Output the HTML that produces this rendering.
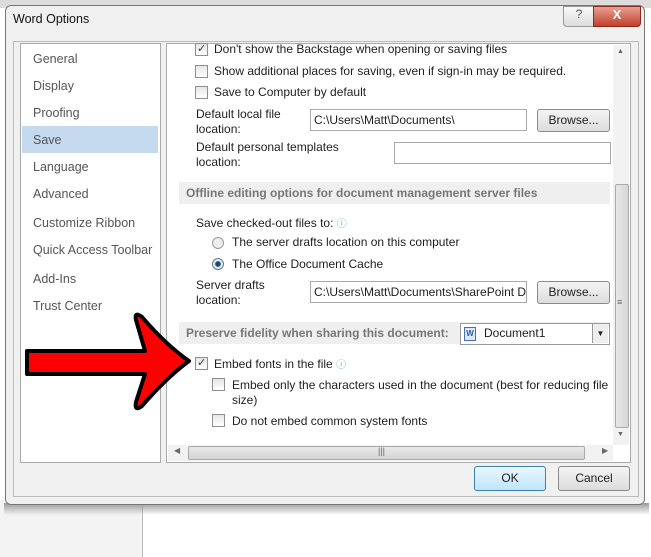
<!DOCTYPE html>
<html><head><style>
body{margin:0;width:651px;height:557px;position:relative;overflow:hidden;background:#fff;font-family:"Liberation Sans",sans-serif;font-size:12px;color:#1e1e1e}
.a{position:absolute}
.cb{position:absolute;width:11px;height:11px;border:1px solid #8e8f8f;background:linear-gradient(#e6e6e6,#fff)}
.btn{position:absolute;border:1px solid #8a8a8a;border-radius:3px;background:linear-gradient(#f4f4f4,#dcdcdc);text-align:center;font-size:12px}
.in{position:absolute;border:1px solid #aaa;background:#fff;height:20px;line-height:20px;padding-left:3px;font-size:12px;overflow:hidden;white-space:nowrap}
.nav{position:absolute;left:33px;color:#555;font-size:12.5px}
.sec{position:absolute;left:179px;width:431px;height:22px;background:#efefef;color:#777;font-weight:bold;line-height:22px;padding-left:7px;box-sizing:border-box}
.ck{position:absolute;font-size:11px;color:#335;line-height:11px}
</style></head><body>
<div class="a" style="left:0;top:0;width:651px;height:8px;background:#dcdcdc"></div>
<div class="a" style="left:0;top:500px;width:142px;height:57px;background:#f3f3f3"></div>
<div class="a" style="left:142px;top:500px;width:1px;height:57px;background:#bbb"></div>
<div class="a" style="left:4px;top:503px;width:645px;height:12px;background:linear-gradient(#999,rgba(255,255,255,0))"></div>
<div class="a" style="left:5px;top:5px;width:640px;height:500px;background:#f0f0f0;border:1px solid #777;border-radius:6px;box-sizing:border-box"></div>
<div class="a" style="left:13px;top:12px;font-size:12.5px;color:#111">Word Options</div>
<div class="a" style="left:563px;top:6px;width:30px;height:19px;border:1px solid #999;border-radius:0 0 0 4px;background:linear-gradient(#f8f8f8,#ddd);text-align:center;color:#555;font-size:12px">?</div>
<div class="a" style="left:593px;top:6px;width:46px;height:19px;border:1px solid #8a2a20;border-radius:0 0 4px 0;background:linear-gradient(#e8a091,#c1402c);text-align:center;color:#fff;font-weight:bold;font-size:13px">X</div>
<div class="a" style="left:13px;top:41px;width:626px;height:456px;background:#f0f0f0;border:1px solid #bbb;box-sizing:border-box"></div>
<div class="a" style="left:20px;top:43px;width:141px;height:420px;background:#fff;border:1px solid #aaa;box-sizing:border-box"></div>
<div class="a" style="left:22px;top:126px;width:136px;height:27px;background:#c5d9ef"></div>
<div class="nav" style="top:52px">General</div>
<div class="nav" style="top:79px">Display</div>
<div class="nav" style="top:106px">Proofing</div>
<div class="nav" style="top:133px">Save</div>
<div class="nav" style="top:160px">Language</div>
<div class="nav" style="top:187px">Advanced</div>
<div class="nav" style="top:216px">Customize Ribbon</div>
<div class="nav" style="top:243px">Quick Access Toolbar</div>
<div class="nav" style="top:272px">Add-Ins</div>
<div class="nav" style="top:299px">Trust Center</div>
<div class="a" style="left:166px;top:43px;width:465px;height:420px;background:#fff;border:1px solid #aaa;box-sizing:border-box"></div>
<div class="cb" style="left:195px;top:43px"></div><div class="ck" style="left:197px;top:44px">✓</div>
<div class="a" style="left:214px;top:42px">Don't show the Backstage when opening or saving files</div>
<div class="cb" style="left:195px;top:65px"></div>
<div class="a" style="left:214px;top:64px">Show additional places for saving, even if sign-in may be required.</div>
<div class="cb" style="left:195px;top:86px"></div>
<div class="a" style="left:214px;top:85px">Save to Computer by default</div>
<div class="a" style="left:196px;top:107px;line-height:15px">Default local file<br>location:</div>
<div class="in" style="left:310px;top:109px;width:212px">C:\Users\Matt\Documents\</div>
<div class="btn" style="left:537px;top:109px;width:71px;height:21px;line-height:21px">Browse...</div>
<div class="a" style="left:196px;top:140px;line-height:15px">Default personal templates<br>location:</div>
<div class="in" style="left:394px;top:142px;width:212px"></div>
<div class="sec" style="top:182px">Offline editing options for document management server files</div>
<div class="a" style="left:196px;top:215px">Save checked-out files to: <span style="color:#7aa;font-size:10px">ⓘ</span></div>
<div class="a" style="left:212px;top:237px;width:10px;height:10px;border:1px solid #999;border-radius:50%;background:#eee"></div>
<div class="a" style="left:232px;top:235px">The server drafts location on this computer</div>
<div class="a" style="left:212px;top:258px;width:10px;height:10px;border:1px solid #678;border-radius:50%;background:radial-gradient(#1b4f7a 35%,#e6eef5 45%)"></div>
<div class="a" style="left:232px;top:257px">The Office Document Cache</div>
<div class="a" style="left:196px;top:278px;line-height:15px">Server drafts<br>location:</div>
<div class="in" style="left:310px;top:281px;width:212px">C:\Users\Matt\Documents\SharePoint D</div>
<div class="btn" style="left:537px;top:281px;width:71px;height:21px;line-height:21px">Browse...</div>
<div class="sec" style="top:322px">Preserve fidelity when sharing this document:</div>
<div class="a" style="left:460px;top:323px;width:148px;height:20px;border:1px solid #999;background:#fff"></div>
<div class="a" style="left:464px;top:327px;width:10px;height:12px;border:1px solid #4670b8;background:#dfe8f6;font-size:8px;color:#2a5aa8;line-height:12px;text-align:center;font-weight:bold">W</div>
<div class="a" style="left:484px;top:326px">Document1</div>
<div class="a" style="left:592px;top:324px;width:15px;height:19px;border-left:1px solid #999;background:#eee;font-size:8px;text-align:center;line-height:19px">▼</div>
<div class="cb" style="left:195px;top:357px"></div><div class="ck" style="left:197px;top:358px">✓</div>
<div class="a" style="left:214px;top:356px">Embed fonts in the file <span style="color:#7aa;font-size:10px">ⓘ</span></div>
<div class="cb" style="left:212px;top:378px"></div>
<div class="a" style="left:232px;top:378px;line-height:15px">Embed only the characters used in the document (best for reducing file<br>size)</div>
<div class="cb" style="left:212px;top:414px"></div>
<div class="a" style="left:232px;top:414px">Do not embed common system fonts</div>
<div class="a" style="left:613px;top:45px;width:16px;height:400px;background:#f2f2f2"></div>
<div class="a" style="left:615px;top:184px;width:12px;height:242px;background:linear-gradient(90deg,#e8e8e8,#d6d6d6);border:1px solid #aaa;border-radius:2px"></div>
<div class="a" style="left:617px;top:297px;font-size:9px;color:#666">≡</div>
<div class="a" style="left:617px;top:48px;font-size:7px;color:#666">▲</div>
<div class="a" style="left:617px;top:431px;font-size:7px;color:#666">▼</div>
<div class="a" style="left:168px;top:445px;width:445px;height:16px;background:#f2f2f2"></div>
<div class="a" style="left:188px;top:446px;width:395px;height:12px;background:linear-gradient(#e8e8e8,#d4d4d4);border:1px solid #aaa;border-radius:2px"></div>
<div class="a" style="left:378px;top:446px;font-size:9px;color:#666">|||</div>
<div class="a" style="left:174px;top:446px;font-size:8px;color:#666">◀</div>
<div class="a" style="left:602px;top:446px;font-size:8px;color:#666">▶</div>
<div class="btn" style="left:474px;top:466px;width:70px;height:23px;line-height:23px;border-color:#3c7fb1;background:linear-gradient(#eaf6fd,#bee6fd)">OK</div>
<div class="btn" style="left:558px;top:466px;width:70px;height:23px;line-height:23px">Cancel</div>
<svg class="a" style="left:0;top:0" width="651" height="557"><path d="M27,351 L145,351 L136,320 Q134,311 142,317 Q166,345 189,361 Q166,378 142,406 Q134,412 136,402 L145,374 L27,374 Z" fill="#f00" stroke="#000" stroke-width="4" stroke-linejoin="round"/></svg>
</body></html>
